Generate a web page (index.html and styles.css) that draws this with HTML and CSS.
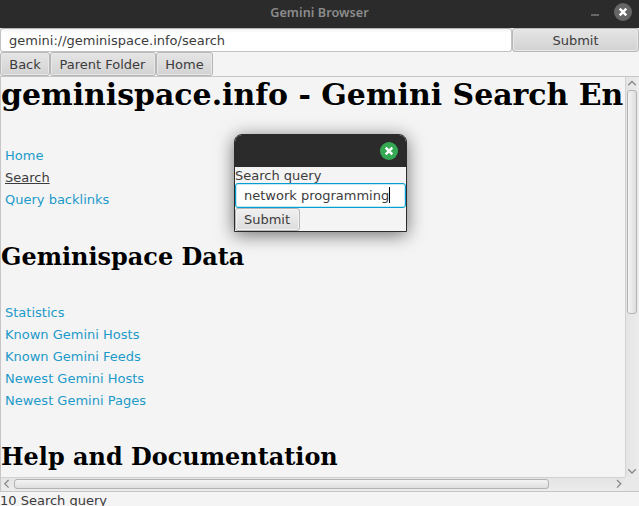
FILE: index.html
```html
<!DOCTYPE html>
<html lang="en">
<head>
<meta charset="utf-8">
<title>Gemini Browser</title>
<link rel="stylesheet" href="styles.css">
</head>
<body>
<div class="window">
  <header class="titlebar">
    <span class="title">Gemini Browser</span>
    <div class="controls">
      <span class="minimize"></span>
      <svg class="close" width="18" height="18" viewBox="0 0 18 18"><circle cx="9" cy="9" r="9" fill="#666"/><path d="M5.7 5.7l6.6 6.6M12.3 5.7l-6.6 6.6" stroke="#fff" stroke-width="2.5"/></svg>
    </div>
  </header>
  <div class="address-row">
    <div class="field address">gemini://geminispace.info/search</div>
    <button class="button go">Submit</button>
  </div>
  <nav class="nav-row">
    <button class="button back">Back</button>
    <button class="button parent">Parent Folder</button>
    <button class="button home">Home</button>
  </nav>
  <main class="scroll-pane">
    <div class="viewport">
      <h1>geminispace.info - Gemini Search En</h1>
      <ul class="links">
        <li><a>Home</a></li>
        <li><a class="visited">Search</a></li>
        <li><a>Query backlinks</a></li>
      </ul>
      <h2>Geminispace Data</h2>
      <ul class="links">
        <li><a>Statistics</a></li>
        <li><a>Known Gemini Hosts</a></li>
        <li><a>Known Gemini Feeds</a></li>
        <li><a>Newest Gemini Hosts</a></li>
        <li><a>Newest Gemini Pages</a></li>
      </ul>
      <h2 class="help">Help and Documentation</h2>
    </div>
    <div class="vbar">
      <svg width="12" height="13" viewBox="0 0 12 13"><path d="M2.2 8.3L6 4.5l3.8 3.8" fill="none" stroke="#888" stroke-width="1.3"/></svg>
      <div class="vthumb"></div>
      <svg class="end" width="12" height="13" viewBox="0 0 12 13"><path d="M2.2 5.2L6 9l3.8-3.8" fill="none" stroke="#888" stroke-width="1.3"/></svg>
    </div>
    <div class="hbar">
      <svg width="13" height="12" viewBox="0 0 13 12"><path d="M7.6 2L3.8 5.8l3.8 3.8" fill="none" stroke="#888" stroke-width="1.3"/></svg>
      <div class="hthumb"></div>
      <svg class="end" width="13" height="12" viewBox="0 0 13 12"><path d="M5 2l3.8 3.8L5 9.6" fill="none" stroke="#888" stroke-width="1.3"/></svg>
    </div>
    <div class="corner"></div>
  </main>
  <footer class="status">10 Search query</footer>
</div>
<section class="dialog">
  <header class="dialog-bar">
    <svg width="18" height="18" viewBox="0 0 18 18"><circle cx="9" cy="9" r="9" fill="#35a854"/><path d="M5.7 5.7l6.6 6.6M12.3 5.7l-6.6 6.6" stroke="#fff" stroke-width="2.5"/></svg>
  </header>
  <div class="dialog-body">
    <div class="label">Search query</div>
    <div class="field focused">network programming<span class="caret"></span></div>
    <button class="button submit">Submit</button>
  </div>
</section>
</body>
</html>
```
FILE: styles.css
```css
* { box-sizing: border-box; }
body {
  margin: 0;
  width: 639px;
  height: 506px;
  overflow: hidden;
  position: relative;
  background: #f4f4f4;
  color: #3c3c3c;
  font: 13px/15px "DejaVu Sans", sans-serif;
}
.window { display: flex; flex-direction: column; height: 506px; }
.titlebar {
  flex: none;
  height: 28px;
  background: #2b2b2b;
  display: grid;
  grid-template-columns: 100px 1fr 100px;
  align-items: center;
}
.title {
  grid-column: 2;
  text-align: center;
  color: #8c8c8c;
  font: 600 12.6px/26px "Noto Sans", sans-serif;
  letter-spacing: .08px;
  height: 28px;
}
.controls { display: flex; justify-content: flex-end; padding: 0 7px 4px 0; }
.minimize { width: 8px; height: 2px; background: #666; margin: 11px 15px 0 0; }
.address-row { display: flex; height: 24px; flex: none; }
.field {
  background: linear-gradient(#f3f3f3, #fff 4px);
  border: 1px solid #c3c3c3;
  border-top-color: #b5b5b5;
  border-radius: 3px;
  height: 24px;
  padding: 4px 8px;
  white-space: nowrap;
}
.address { width: 512px; }
.button {
  font: inherit;
  color: #3c3c3c;
  height: 24px;
  padding: 1px 0 0;
  border: 1px solid #b7b7b7;
  border-radius: 3px;
  background: linear-gradient(#e5e5e5, #d2d2d2);
  box-shadow: inset 0 0 0 1px #e8e8e8;
}
.go { width: 127px; }
.nav-row { display: flex; height: 24px; flex: none; }
.back { width: 50px; }
.parent { width: 106px; padding-right: 1px; }
.home { width: 57px; }
.scroll-pane {
  flex: none;
  height: 416px;
  border: 1px solid #c6c6c6;
  border-right: 0;
  display: grid;
  grid-template: 400px 14px / 624px 14px;
}
.viewport { overflow: hidden; white-space: nowrap; color: #000; }
h1, h2 { margin: 0; font-family: "DejaVu Serif", serif; font-weight: bold; }
h1 { font-size: 29.95px; line-height: 36px; height: 68px; }
h2 { font-size: 23.95px; line-height: 28px; height: 59px; margin-top: 32px; }
.help { margin-top: 31px; }
.links { list-style: none; margin: 0; padding: 0 4px; line-height: 22px; }
.links li { height: 22px; }
.links a { color: #1c9aca; }
.links .visited { color: #3c3c3c; text-decoration: underline; text-underline-offset: 1px; text-decoration-skip-ink: none; }
.vbar {
  border-left: 1px solid #d2d2d2;
  background: linear-gradient(90deg, #e4e4e4, #ececec);
  display: flex;
  flex-direction: column;
  padding-right: 1px;
}
.vthumb {
  width: 10px;
  height: 224px;
  margin-left: 1px;
  border: 1px solid #b3b3b3;
  border-radius: 3px;
  background: linear-gradient(90deg, #f4f4f4, #dedede);
}
.vbar svg, .hbar svg { flex: none; display: block; }
.vbar .end { margin-top: auto; }
.hbar {
  border-top: 1px solid #d2d2d2;
  background: linear-gradient(#e4e4e4, #ececec);
  display: flex;
}
.hthumb {
  width: 535px;
  height: 10px;
  margin-top: 1px;
  border: 1px solid #b3b3b3;
  border-radius: 3px;
  background: linear-gradient(#f4f4f4, #dedede);
}
.hbar .end { margin-left: auto; }
.corner { background: #e9e9e9; }
.status { height: 14px; overflow: hidden; white-space: nowrap; line-height: 17px; }
.dialog {
  position: absolute;
  left: 234px;
  top: 134px;
  width: 173px;
  height: 98px;
  border: 1px solid #2b2b2b;
  border-radius: 8px 8px 0 0;
  background: #f4f4f4;
  overflow: hidden;
  box-shadow: 0 3px 18px rgba(0, 0, 0, .55);
}
.dialog-bar {
  height: 32px;
  background: #2b2b2b;
  display: flex;
  justify-content: flex-end;
  padding: 7px 8px 0 0;
}
.dialog-body { display: flex; flex-direction: column; align-items: flex-start; }
.label { height: 16px; line-height: 17px; }
.focused {
  width: 171px;
  height: 25px;
  padding-top: 3px;
  border: 1px solid #039ed3;
  box-shadow: inset 0 0 0 1px #c5e8f5;
  background: #fff;
}
.caret { display: inline-block; width: 1px; height: 16px; background: #000; vertical-align: -3px; }
.submit { width: 65px; height: 23px; padding: 0 1px 0 0; background: linear-gradient(#f0f0f0, #dcdcdc); box-shadow: inset 0 0 0 1px #f3f3f3; }
```
